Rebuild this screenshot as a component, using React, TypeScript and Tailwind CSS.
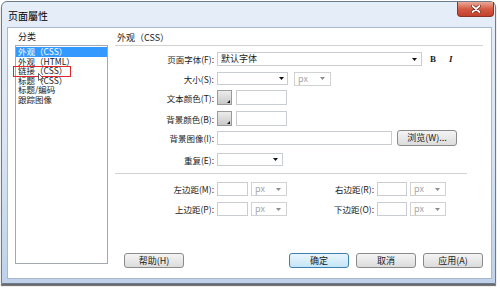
import React from "react";

const FONT = "font-['Noto_Sans_CJK_SC','Noto_Sans',sans-serif]";

function Arrow({ gray = false }: { gray?: boolean }) {
  return (
    <svg width="5" height="3" viewBox="0 0 5 3" className="shrink-0">
      <path d="M0 0H5L2.5 3Z" fill={gray ? "#8c8c8c" : "#111"} />
    </svg>
  );
}

function Row({ label, children, className }: { label: string; children?: React.ReactNode; className: string }) {
  return (
    <div className={`flex items-center ${className}`}>
      <div className="w-[99px] text-right text-[8.5px] leading-[10px] whitespace-nowrap">{label}</div>
      <div className="ml-[3px] flex items-center h-full">{children}</div>
    </div>
  );
}

function Swatch() {
  return (
    <div className="w-[15px] h-[15px] border border-[#9a9a9a] bg-gradient-to-b from-[#ececec] to-[#c9c9c9] flex items-end justify-end p-[1px]">
      <svg width="3" height="3" viewBox="0 0 3 3">
        <path d="M3 0V3H0Z" fill="#111" />
      </svg>
    </div>
  );
}

function PxSelect({ w }: { w: string }) {
  return (
    <div className={`${w} h-[14px] border border-[#d2d2d2] bg-white flex items-center justify-between pl-[3px] pr-[5px] text-[#a6a6a6] leading-[10px]`}>
      <span>px</span>
      <Arrow gray />
    </div>
  );
}

function Btn({ children, primary = false }: { children: React.ReactNode; primary?: boolean }) {
  return (
    <div
      className={`w-[60px] h-[15px] rounded-[3px] border flex items-center justify-center leading-[10px] ${
        primary
          ? "border-[#3c7fb1] bg-gradient-to-b from-[#eaf6fd] to-[#c4e5f6]"
          : "border-[#8a8a8a] bg-gradient-to-b from-[#f4f4f4] to-[#dcdcdc]"
      }`}
    >
      {children}
    </div>
  );
}

const items = ["外观（CSS）", "外观（HTML）", "链接（CSS）", "标题（CSS）", "标题/编码", "跟踪图像"];

export default function App() {
  return (
    <div className={`w-[500px] h-[288px] bg-white pt-[1px] ${FONT} text-[9px] text-[#1a1a1a]`}>
      <div className="ml-[1px] w-[495px] h-[283px] rounded-t-[6px] border border-[#6c7b8f] bg-gradient-to-b from-[#e6eef8] via-[#d8e5f4] to-[#bfd2ea] flex flex-col shadow-[0_2px_1px_rgba(40,40,40,0.7)]">
        {/* title bar */}
        <div className="h-[25px] flex items-start">
          <span className="ml-[6px] mt-[8px] text-[10px] leading-[12px] text-black">页面屬性</span>
          <div className="ml-auto mr-[1px] w-[37px] h-[15px] rounded-b-[4px] border border-t-0 border-[#8a3426] bg-gradient-to-b from-[#eaa898] via-[#d45a43] to-[#c3412c] flex items-center justify-center">
            <svg width="10" height="8" viewBox="0 0 10 8">
              <path d="M1.5 1L8.5 7M8.5 1L1.5 7" stroke="#5a1a10" strokeWidth="3" strokeLinecap="round" />
              <path d="M1.5 1L8.5 7M8.5 1L1.5 7" stroke="#fff" strokeWidth="1.8" strokeLinecap="round" />
            </svg>
          </div>
        </div>

        {/* client area */}
        <div className="ml-[5px] w-[485px] h-[252px] bg-white border border-[#a7b8cc] flex">
          {/* left column */}
          <div className="ml-[7px] w-[93px] flex flex-col">
            <div className="pt-[4px] pl-[3px] leading-[10px]">分类</div>
            <div className="mt-[3px] h-[219px] border border-[#a3a7ae] pt-[1px] relative">
              {items.map((t, i) => (
                <div
                  key={t}
                  className={`h-[9.5px] pl-[2px] text-[8.5px] leading-[9.5px] whitespace-nowrap ${i === 0 ? "bg-[#3399ff] text-white" : ""}`}
                >
                  {t}
                </div>
              ))}
              <div className="absolute left-[-3px] top-[20px] w-[58px] h-[11px] border-[1.5px] border-[#e0262a]" />
              <svg className="absolute left-[22px] top-[27px]" width="6" height="9" viewBox="0 0 6 9">
                <path d="M0.5 0.5V7.5L2.2 6L3.5 8.5L4.5 8L3.3 5.6H5.5Z" fill="#fff" stroke="#222" strokeWidth="0.7" />
              </svg>
            </div>
          </div>

          {/* right column */}
          <div className="ml-[7px] w-[368px] flex flex-col">
            <div className="pt-[5px] pb-[2px] pl-[2px] leading-[10px] border-b border-[#d2d2d2]">外观（CSS）</div>

            <Row label="页面字体(F):" className="mt-[6px] h-[14px]">
              <div className="w-[205px] h-[14px] border border-[#c9ccd1] flex items-center justify-between pl-[3px] pr-[4px] leading-[10px]">
                <span>默认字体</span>
                <Arrow />
              </div>
              <span className="ml-[8px] font-['Liberation_Serif',serif] font-bold text-[9px] leading-[10px]">B</span>
              <span className="ml-[13px] font-['Liberation_Serif',serif] font-bold italic text-[9px] leading-[10px]">I</span>
            </Row>

            <Row label="大小(S):" className="mt-[6px] h-[13px]">
              <div className="w-[71px] h-[13px] border border-[#c9ccd1] flex items-center justify-end pr-[3px]">
                <Arrow />
              </div>
              <div className="ml-[6px]">
                <PxSelect w="w-[37px]" />
              </div>
            </Row>

            <Row label="文本颜色(T):" className="mt-[5px] h-[15px]">
              <Swatch />
              <div className="ml-[4px] w-[51px] h-[15px] border border-[#c9ccd1]" />
            </Row>

            <Row label="背景颜色(B):" className="mt-[6px] h-[15px]">
              <Swatch />
              <div className="ml-[4px] w-[51px] h-[15px] border border-[#c9ccd1]" />
            </Row>

            <Row label="背景图像(I):" className="mt-[4px] h-[16px]">
              <div className="w-[175px] h-[14px] border border-[#c9ccd1]" />
              <div className="ml-[5px] w-[60px] h-[16px] rounded-[3px] border border-[#8a8a8a] bg-gradient-to-b from-[#f4f4f4] to-[#dcdcdc] flex items-center justify-center leading-[10px]">
                浏览(W)...
              </div>
            </Row>

            <Row label="重复(E):" className="mt-[7px] h-[13px]">
              <div className="w-[66px] h-[13px] border border-[#c9ccd1] flex items-center justify-end pr-[4px]">
                <Arrow />
              </div>
            </Row>

            <div className="mt-[7px] w-[352px] h-px bg-[#d2d2d2]" />

            <Row label="左边距(M):" className="mt-[8px] h-[14px]">
              <div className="w-[31px] h-[14px] border border-[#c9ccd1]" />
              <div className="ml-[3px]">
                <PxSelect w="w-[36px]" />
              </div>
              <div className="w-[87px] text-right text-[8.5px] leading-[10px]">右边距(R):</div>
              <div className="ml-[3px] w-[30px] h-[14px] border border-[#c9ccd1]" />
              <div className="ml-[3px]">
                <PxSelect w="w-[36px]" />
              </div>
            </Row>

            <Row label="上边距(P):" className="mt-[6px] h-[14px]">
              <div className="w-[31px] h-[14px] border border-[#c9ccd1]" />
              <div className="ml-[3px]">
                <PxSelect w="w-[36px]" />
              </div>
              <div className="w-[87px] text-right text-[8.5px] leading-[10px]">下边距(O):</div>
              <div className="ml-[3px] w-[30px] h-[14px] border border-[#c9ccd1]" />
              <div className="ml-[3px]">
                <PxSelect w="w-[36px]" />
              </div>
            </Row>

            <div className="mt-[37px] flex pl-[9px]">
              <Btn>帮助(H)</Btn>
              <div className="ml-auto flex gap-[7px]">
                <Btn primary>确定</Btn>
                <Btn>取消</Btn>
                <Btn>应用(A)</Btn>
              </div>
            </div>
          </div>
        </div>
      </div>
    </div>
  );
}
